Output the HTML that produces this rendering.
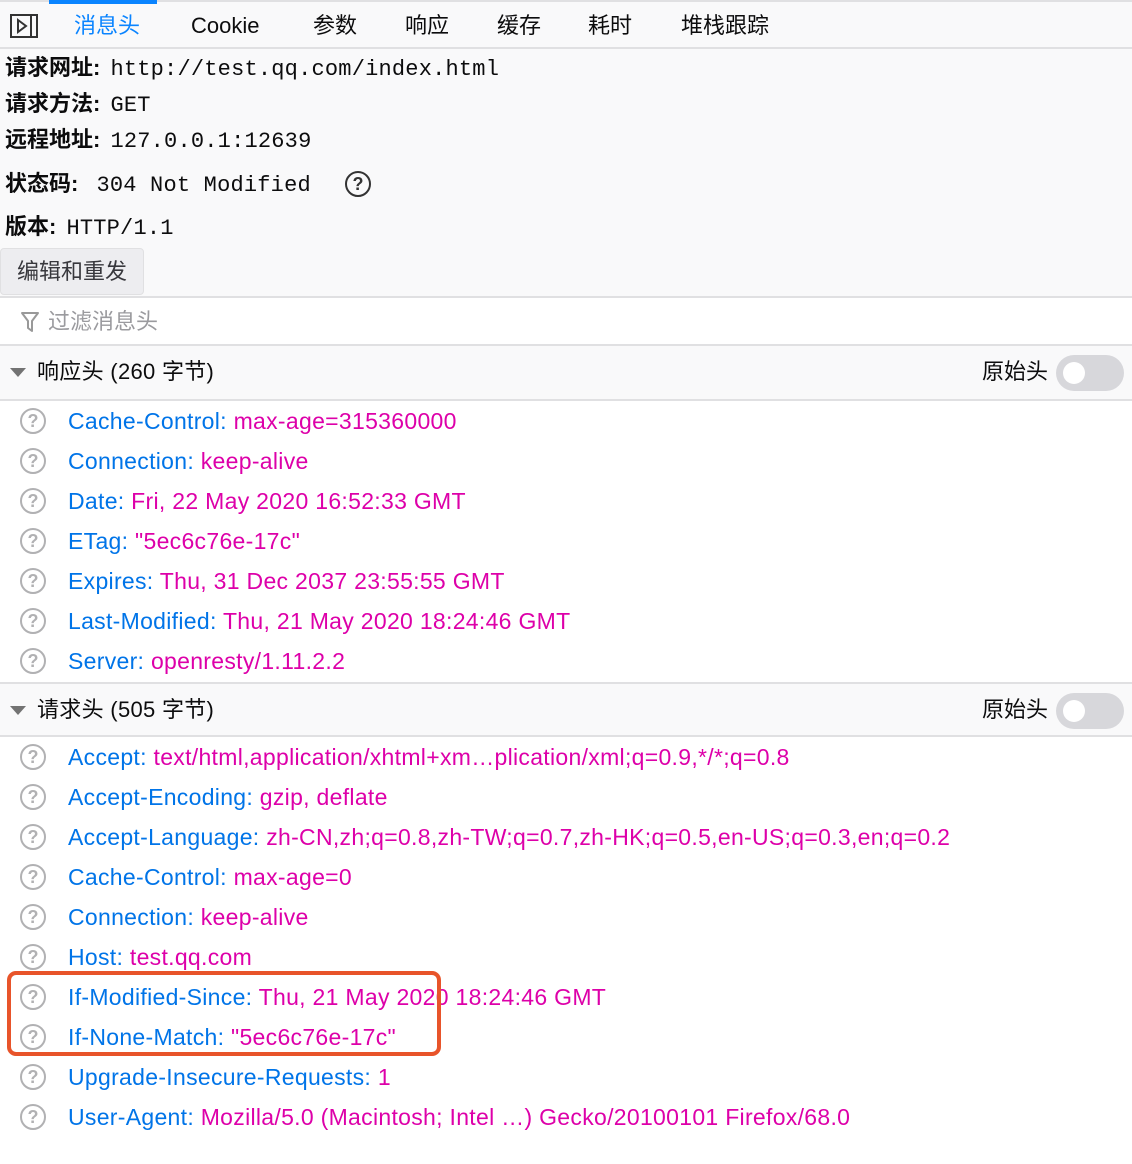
<!DOCTYPE html>
<html><head><meta charset="utf-8"><style>
*{margin:0;padding:0;box-sizing:border-box}
body{width:1132px;height:1164px;background:#fff;font-family:"Liberation Sans","Noto Sans CJK SC",sans-serif;color:#0c0c0d;position:relative;overflow:hidden}
.abs{position:absolute}
.tabs{left:0;top:0;width:1132px;height:49px;background:#f9f9fa;border-top:2px solid #e0e0e2;border-bottom:2px solid #e0e0e2}
.tab{position:absolute;top:10px;font-size:22px;line-height:28px;white-space:nowrap}
.sum{left:0;top:49px;width:1132px;height:249px;background:#f9f9fa;border-bottom:2px solid #e0e0e2}
.sl{position:absolute;left:5px;font-size:22px;line-height:28px;white-space:nowrap}
.sl b{font-weight:bold}
.mono{font-family:"Liberation Mono","DejaVu Sans Mono",monospace;font-size:22px;margin-left:4px;letter-spacing:0.2px}
.btn{position:absolute;left:0;top:248px;width:144px;height:47px;background:#ededf0;border:1px solid #e0e0e2;border-radius:4px;font-size:22px;line-height:45px;padding-left:16px;color:#38383d}
.filter{left:0;top:298px;width:1132px;height:48px;background:#fff;border-bottom:2px solid #e0e0e2}
.hdr{left:0;width:1132px;height:55px;background:#f9f9fa;border-bottom:2px solid #e0e0e2}
.hdr .t{position:absolute;left:37px;top:12px;font-size:22px;line-height:28px;letter-spacing:0.3px}
.hdr .tri{position:absolute;left:10px;top:22px;width:0;height:0;border-left:8px solid transparent;border-right:8px solid transparent;border-top:9px solid #737373}
.hdr .raw{position:absolute;left:982px;top:12px;font-size:22px;line-height:28px}
.hdr .tg{position:absolute;left:1056px;top:9px;width:68px;height:36px;border-radius:18px;background:#d7d7db}
.hdr .tg:after{content:"";position:absolute;left:7px;top:7px;width:22px;height:22px;border-radius:50%;background:#fff}
.row{position:absolute;left:0;height:40px;width:1132px;font-size:23px;line-height:28px;white-space:nowrap;letter-spacing:0.3px}
.row .q{position:absolute;left:20px;top:7px;width:26px;height:26px;border:2px solid #b1b1b3;border-radius:50%;color:#b1b1b3;font-size:18px;line-height:22px;text-align:center;font-weight:bold;letter-spacing:0}
.row .k{position:absolute;left:68px;top:6px;color:#0074e8}
.row .k i{font-style:normal;color:#dd00a9}
</style></head><body>
<div class="abs tabs">
  <svg class="abs" style="left:10px;top:12px" width="28" height="24" viewBox="0 0 28 24"><rect x="1" y="1" width="26" height="22" fill="none" stroke="#333" stroke-width="2"/><line x1="21" y1="1" x2="21" y2="23" stroke="#333" stroke-width="2"/><path d="M8 6 L16 12 L8 18 Z" fill="none" stroke="#333" stroke-width="2"/></svg>
  <div class="abs" style="left:49px;top:-2px;width:108px;height:4px;background:#0a84ff"></div>
  <div class="tab" style="left:74px;color:#0a84ff">消息头</div>
  <div class="tab" style="left:191px">Cookie</div>
  <div class="tab" style="left:313px">参数</div>
  <div class="tab" style="left:405px">响应</div>
  <div class="tab" style="left:497px">缓存</div>
  <div class="tab" style="left:588px">耗时</div>
  <div class="tab" style="left:681px">堆栈跟踪</div>
</div>
<div class="abs sum">
  <div class="sl" style="top:5px"><b>请求网址:</b> <span class="mono">http://test.qq.com/index.html</span></div>
  <div class="sl" style="top:41px"><b>请求方法:</b> <span class="mono">GET</span></div>
  <div class="sl" style="top:77px"><b>远程地址:</b> <span class="mono">127.0.0.1:12639</span></div>
  <div class="sl" style="top:121px"><b>状态码:</b> <span class="mono" style="margin-left:12px">304 Not Modified</span></div>
  <div class="abs" style="left:345px;top:122px;width:26px;height:26px;border:2px solid #333;border-radius:50%;font-size:18px;line-height:22px;text-align:center;font-weight:bold;color:#333">?</div>
  <div class="sl" style="top:164px"><b>版本:</b> <span class="mono">HTTP/1.1</span></div>
</div>
<div class="btn">编辑和重发</div>
<div class="abs filter">
  <svg class="abs" style="left:20px;top:13px" width="20" height="22" viewBox="0 0 20 22"><path d="M2 2 H18 L12 10 V20 L8 17 V10 Z" fill="none" stroke="#999" stroke-width="2" stroke-linejoin="round"/></svg>
  <div class="abs" style="left:48px;top:10px;font-size:22px;line-height:28px;color:#9a9a9e">过滤消息头</div>
</div>
<div class="abs hdr" style="top:346px"><div class="tri"></div><div class="t">响应头 (260 字节)</div><div class="raw">原始头</div><div class="tg"></div></div>
<div class="row" style="top:401px"><div class="q">?</div><div class="k">Cache-Control: <i>max-age=315360000</i></div></div>
<div class="row" style="top:441px"><div class="q">?</div><div class="k">Connection: <i>keep-alive</i></div></div>
<div class="row" style="top:481px"><div class="q">?</div><div class="k">Date: <i>Fri, 22 May 2020 16:52:33 GMT</i></div></div>
<div class="row" style="top:521px"><div class="q">?</div><div class="k">ETag: <i>"5ec6c76e-17c"</i></div></div>
<div class="row" style="top:561px"><div class="q">?</div><div class="k">Expires: <i>Thu, 31 Dec 2037 23:55:55 GMT</i></div></div>
<div class="row" style="top:601px"><div class="q">?</div><div class="k">Last-Modified: <i>Thu, 21 May 2020 18:24:46 GMT</i></div></div>
<div class="row" style="top:641px"><div class="q">?</div><div class="k">Server: <i>openresty/1.11.2.2</i></div></div>
<div class="abs hdr" style="top:682px;border-top:2px solid #e0e0e2"><div class="tri"></div><div class="t">请求头 (505 字节)</div><div class="raw">原始头</div><div class="tg"></div></div>
<div class="row" style="top:737px"><div class="q">?</div><div class="k">Accept: <i>text/html,application/xhtml+xm…plication/xml;q=0.9,*/*;q=0.8</i></div></div>
<div class="row" style="top:777px"><div class="q">?</div><div class="k">Accept-Encoding: <i>gzip, deflate</i></div></div>
<div class="row" style="top:817px"><div class="q">?</div><div class="k">Accept-Language: <i>zh-CN,zh;q=0.8,zh-TW;q=0.7,zh-HK;q=0.5,en-US;q=0.3,en;q=0.2</i></div></div>
<div class="row" style="top:857px"><div class="q">?</div><div class="k">Cache-Control: <i>max-age=0</i></div></div>
<div class="row" style="top:897px"><div class="q">?</div><div class="k">Connection: <i>keep-alive</i></div></div>
<div class="row" style="top:937px"><div class="q">?</div><div class="k">Host: <i>test.qq.com</i></div></div>
<div class="row" style="top:977px"><div class="q">?</div><div class="k">If-Modified-Since: <i>Thu, 21 May 2020 18:24:46 GMT</i></div></div>
<div class="row" style="top:1017px"><div class="q">?</div><div class="k">If-None-Match: <i>"5ec6c76e-17c"</i></div></div>
<div class="row" style="top:1057px"><div class="q">?</div><div class="k">Upgrade-Insecure-Requests: <i>1</i></div></div>
<div class="row" style="top:1097px"><div class="q">?</div><div class="k">User-Agent: <i>Mozilla/5.0 (Macintosh; Intel …) Gecko/20100101 Firefox/68.0</i></div></div>
<div class="abs" style="left:7px;top:971px;width:434px;height:85px;border:4px solid #e8542a;border-radius:9px"></div>
</body></html>
